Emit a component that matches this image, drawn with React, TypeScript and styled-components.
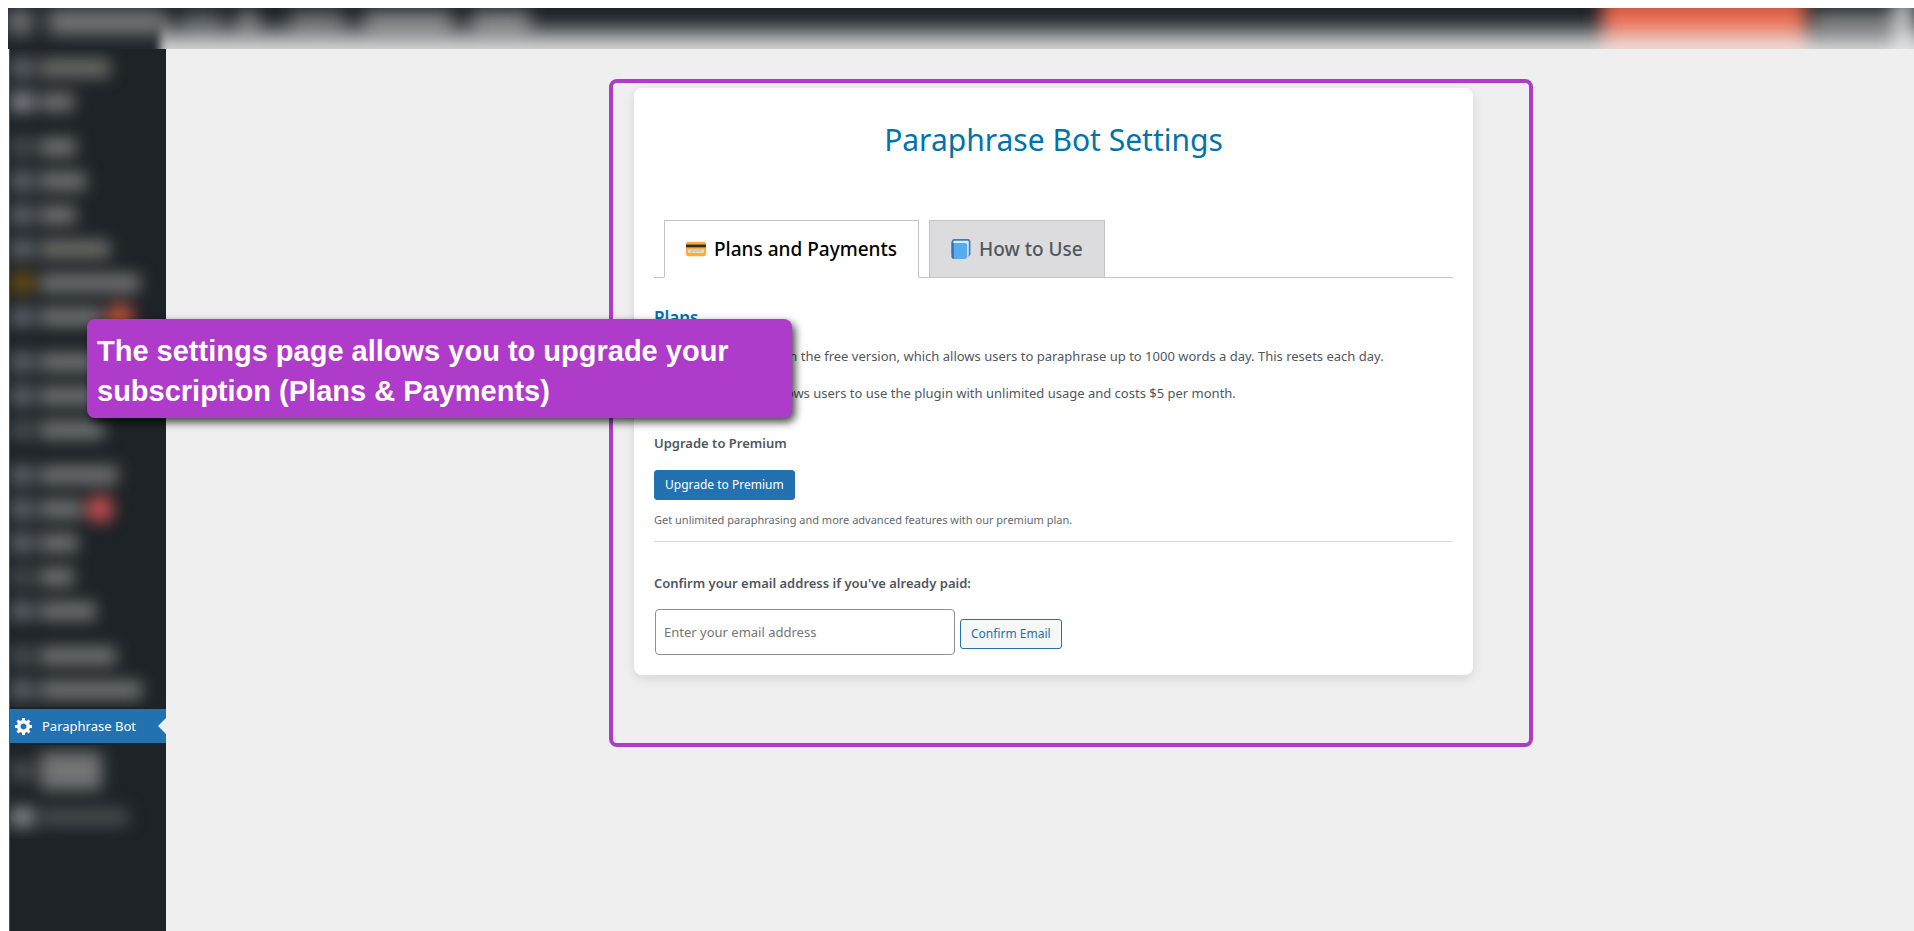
import React, { useState } from 'react';
import styled, { createGlobalStyle, css } from 'styled-components';

const accent = '#ae3bc9';
const ink = '#1d2327';
const canvas = '#efefef';

const GlobalStyle = createGlobalStyle`
  *, *::before, *::after { box-sizing: border-box; }
  html, body, #root { height: 100%; }
  body {
    margin: 0;
    background: #fff;
    color: #50575e;
    font: 400 13px/20px "Noto Sans", "Open Sans", sans-serif;
  }
  button, input { font: inherit; }
  h1, h2, h3, p { margin: 0; }
`;

const Page = styled.div`
  display: flex;
  flex-direction: column;
  min-height: 100%;
  padding: 8px 0 0 8px;
`;

const TopBar = styled.header`
  position: relative;
  flex: none;
  display: flex;
  height: 41px;
  overflow: hidden;
  background: ${ink};
`;

const BarItems = styled.div`
  flex: 1;
  display: flex;
  align-items: flex-start;
  padding-top: 2px;
  filter: blur(9px);
`;

const BarItem = styled.span<{ $w: number; $gap?: number; $tone?: string }>`
  flex: none;
  width: ${p => p.$w}px;
  height: 24px;
  margin-right: ${p => p.$gap ?? 16}px;
  background: ${p => p.$tone ?? '#77797b'};
`;

const BarSpace = styled.span`
  flex: 1;
`;

const UpdateItem = styled.span`
  flex: none;
  width: 204px;
  height: 64px;
  margin: -12px 8px 0 0;
  background: #e8654a;
`;

const AccountItem = styled.span`
  flex: none;
  width: 80px;
  height: 24px;
  background: #6b6e70;
`;

const BarEdge = styled.span`
  flex: none;
  width: 20px;
  height: 64px;
  margin-top: -12px;
  background: #c4c4c4;
`;

const BarFade = styled.div`
  position: absolute;
  inset: 0 -24px -12px 152px;
  background: linear-gradient(
    rgba(239, 239, 239, 0) 10%,
    rgba(239, 239, 239, 0.2) 32%,
    rgba(239, 239, 239, 0.6) 56%,
    rgba(239, 239, 239, 0.86) 76%
  );
  filter: blur(4px);
`;

const Body = styled.div`
  flex: 1;
  display: flex;
`;

const Sidebar = styled.nav`
  flex: none;
  display: flex;
  flex-direction: column;
  width: 157px;
  margin-left: 1px;
  border-left: 1px solid #50575e;
  background: ${ink};
`;

const HazeGroup = styled.div`
  overflow: hidden;
  padding-top: 2px;
`;

const Haze = styled.div`
  filter: blur(8px);
`;

const HazeRow = styled.div<{ $apart?: boolean; $h?: number }>`
  display: flex;
  align-items: center;
  height: ${p => p.$h ?? 34}px;
  margin-top: ${p => (p.$apart ? 11 : 0)}px;
`;

const HazeIcon = styled.span<{ $tone?: string }>`
  flex: none;
  width: 24px;
  height: 20px;
  margin-right: 6px;
  background: ${p => p.$tone ?? '#5c6168'};
`;

const HazeLabel = styled.span<{ $w: number; $h?: number; $tone?: string }>`
  flex: none;
  width: ${p => p.$w}px;
  height: ${p => p.$h ?? 18}px;
  background: ${p => p.$tone ?? '#727475'};
`;

const HazeBadge = styled.span<{ $tone: string }>`
  flex: none;
  width: 28px;
  height: 28px;
  margin-left: 4px;
  border-radius: 50%;
  background: ${p => p.$tone};
`;

const MenuLink = styled.a`
  position: relative;
  display: flex;
  align-items: center;
  gap: 9px;
  height: 34px;
  margin: 2px 0;
  padding-left: 5px;
  background: #2271b1;
  color: #fff;
  line-height: 18px;
  text-decoration: none;

  &::after {
    content: '';
    position: absolute;
    right: 0;
    top: 9px;
    border: 8px solid transparent;
    border-left: 0;
    border-right-color: ${canvas};
  }
`;

const Main = styled.main`
  flex: 1;
  padding: 30px 0 40px 62px;
  background: ${canvas};
`;

const Highlight = styled.div`
  width: 924px;
  max-width: 100%;
  margin: 0 auto;
  padding: 5px 56px 68px 21px;
  border: 4px solid ${accent};
  border-radius: 8px;
`;

const Card = styled.section`
  padding: 20px;
  border-radius: 8px;
  background: #fff;
  box-shadow: 0 4px 12px rgba(0, 0, 0, 0.1);
`;

const Title = styled.h1`
  padding: 12px 0 60px;
  color: #0073aa;
  font-size: 30px;
  font-weight: 400;
  line-height: 40px;
  text-align: center;
`;

const Tabs = styled.div`
  display: flex;
  gap: 10px;
  padding-left: 10px;
  border-bottom: 1px solid #c3c4c7;
`;

const Tab = styled.button<{ $active: boolean }>`
  display: flex;
  align-items: center;
  gap: 8px;
  height: 58px;
  margin-bottom: -1px;
  padding: 0 21px;
  border: 1px solid #c3c4c7;
  background: #dcdcde;
  color: #50575e;
  font-size: 19px;
  font-weight: 500;
  line-height: 24px;
  ${p => p.$active && css`
    border-bottom-color: #fff;
    background: #fff;
    color: #000;
  `}
`;

const SectionTitle = styled.h2`
  margin: 28px 0 16px;
  color: #0073aa;
  font-size: 17px;
  font-weight: 600;
  line-height: 24px;
`;

const Text = styled.p`
  margin-bottom: 17px;
`;

const Label = styled.h3`
  padding: 13px 0 17px;
  font-size: 13px;
  font-weight: 600;
  line-height: 20px;
`;

const FieldLabel = styled.label`
  display: block;
  padding: 31px 0 16px;
  font-weight: 600;
`;

const Button = styled.button<{ $primary?: boolean }>`
  height: 30px;
  padding: 0 10px;
  border: 1px solid #2271b1;
  border-radius: 3px;
  background: ${p => (p.$primary ? '#2271b1' : '#f6f7f7')};
  color: ${p => (p.$primary ? '#fff' : '#2271b1')};
  font-size: 12px;
`;

const Note = styled.p`
  padding: 10px 0 11px;
  color: #646970;
  font-size: 11px;
`;

const Rule = styled.hr`
  margin: 0;
  border: 0;
  border-top: 1px solid #dcdcde;
`;

const EmailRow = styled.form`
  display: flex;
  align-items: flex-end;
  gap: 5px;
  padding-left: 1px;
`;

const EmailInput = styled.input`
  width: 300px;
  height: 46px;
  padding: 0 8px;
  border: 1px solid #8c8f94;
  border-radius: 4px;
  background: #fff;
  color: #2c3338;

  &::placeholder { color: #757575; opacity: 1; }
`;

const ButtonSlot = styled.div`
  padding-bottom: 6px;
`;

const Callout = styled.aside`
  position: absolute;
  top: 319px;
  left: 87px;
  width: 705px;
  padding: 12px 10px 7px;
  border-radius: 8px;
  background: ${accent};
  box-shadow: 3px 4px 8px rgba(0, 0, 0, 0.75);
  color: #fff;
  font: 700 29px/40px "Liberation Sans", Arial, sans-serif;
`;

const GearIcon = () => (
  <svg width="18" height="18" viewBox="1 1 18 18" fill="#fff" aria-hidden="true">
    <path d="M18 12h-2.180c-.17.7-.44 1.350-.81 1.930l1.540 1.540-2.100 2.100-1.540-1.540c-.58.36-1.230.63-1.910.79V19H8v-2.180c-.68-.16-1.330-.43-1.910-.79l-1.540 1.540-2.120-2.120 1.540-1.540c-.36-.58-.63-1.230-.79-1.910H1V9.030h2.170c.16-.7.44-1.350.8-1.940L2.430 5.550l2.100-2.100 1.540 1.540c.58-.37 1.240-.64 1.930-.81V2h3v2.180c.68.16 1.330.43 1.910.79l1.540-1.540 2.120 2.120-1.540 1.540c.36.59.64 1.240.8 1.940H18V12zm-8.500 1.500c1.660 0 3-1.340 3-3s-1.340-3-3-3-3 1.340-3 3 1.340 3 3 3z" />
  </svg>
);

const CardIcon = () => (
  <svg width="20" height="20" viewBox="0 0 36 36" aria-hidden="true">
    <path fill="#ffac33" d="M4 5h28s4 0 4 4v18s0 4-4 4H4s-4 0-4-4V9s0-4 4-4z" />
    <path fill="#292f33" d="M0 10h36v5H0z" />
    <path fill="#e9dfd0" d="M4 19h28v6H4z" />
    <path fill="none" stroke="#8899a6" d="M8 24c2-3 3-4 3-2s3-3 4-1 3 0 4 0 2 2 3 0 3 2 6 0" />
  </svg>
);

const BookIcon = () => (
  <svg width="20" height="22" viewBox="0 0 36 38" aria-hidden="true">
    <path fill="#3f7fb0" d="M35 28c0 2-2 4-4 4H7c-3 0-6-2-6-5V6c0-3 2-5 5-5h25c2 0 4 2 4 4z" />
    <path fill="#e1e8ed" d="M32 30c0 1-1 2-2 2H7c-2 0-3-1-3-3V7c0-2 1-3 3-3h23c1 0 2 1 2 2z" />
    <path fill="#55acee" d="M29 33c0 2-2 4-4 4H5c-2 0-4-2-4-4V7c1 1 2 1 4 1h20c2 0 4 1 4 4z" />
    <path fill="#2f75ab" d="M5 37c-2 0-4-2-4-4V6c0 1 1 2 4 2z" />
  </svg>
);

type Item = {
  w: number;
  h?: number;
  row?: number;
  apart?: boolean;
  icon?: string;
  tone?: string;
  badge?: string;
};

const upperItems: Item[] = [
  { w: 70, tone: '#6e6e6a' },
  { w: 34, icon: '#80838a' },
  { w: 36, apart: true, icon: '#454a4f' },
  { w: 46 },
  { w: 36 },
  { w: 70, tone: '#6e6e6a' },
  { w: 100, icon: '#6a4c12' },
  { w: 62, badge: '#b8503c' },
  { w: 76, apart: true },
  { w: 62 },
  { w: 64, icon: '#484c50' },
  { w: 78, apart: true },
  { w: 42, badge: '#c04c4e' },
  { w: 38 },
  { w: 34, icon: '#42474b' },
  { w: 56 },
  { w: 76, apart: true, icon: '#484c50' },
  { w: 102 },
];

const lowerItems: Item[] = [
  { w: 62, h: 38, row: 48, icon: '#484c50' },
  { w: 88, row: 44, icon: '#83868a', tone: '#464b4e' },
];

const HazeList = ({ items }: { items: Item[] }) => (
  <HazeGroup aria-hidden="true">
    <Haze>
      {items.map((it, i) => (
        <HazeRow key={i} $apart={it.apart} $h={it.row}>
          <HazeIcon $tone={it.icon} />
          <HazeLabel $w={it.w} $h={it.h} $tone={it.tone} />
          {it.badge && <HazeBadge $tone={it.badge} />}
        </HazeRow>
      ))}
    </Haze>
  </HazeGroup>
);

const tabs = [
  { name: 'Plans and Payments', Icon: CardIcon },
  { name: 'How to Use', Icon: BookIcon },
];

export default function App() {
  const [active, setActive] = useState(0);
  return (
    <Page>
      <GlobalStyle />
      <TopBar>
        <BarItems aria-hidden="true">
          <BarItem $w={24} />
          <BarItem $w={118} />
          <BarItem $w={40} $tone="#4d5255" />
          <BarItem $w={20} $gap={32} />
          <BarItem $w={54} $gap={20} $tone="#606467" />
          <BarItem $w={88} $gap={20} />
          <BarItem $w={58} />
          <BarSpace />
          <UpdateItem />
          <AccountItem />
          <BarEdge />
        </BarItems>
        <BarFade />
      </TopBar>
      <Body>
        <Sidebar aria-label="Admin menu">
          <HazeList items={upperItems} />
          <MenuLink href="#paraphrase-bot" aria-current="page">
            <GearIcon />
            Paraphrase Bot
          </MenuLink>
          <HazeList items={lowerItems} />
        </Sidebar>
        <Main>
          <Highlight>
            <Card>
              <Title>Paraphrase Bot Settings</Title>
              <Tabs role="tablist">
                {tabs.map(({ name, Icon }, i) => (
                  <Tab
                    key={name}
                    type="button"
                    role="tab"
                    aria-selected={active === i}
                    $active={active === i}
                    onClick={() => setActive(i)}
                  >
                    <Icon />
                    {name}
                  </Tab>
                ))}
              </Tabs>
              <SectionTitle>Plans</SectionTitle>
              <Text>
                Your site is currently on the free version, which allows users to paraphrase up to 1000 words a day.
                This resets each day.
              </Text>
              <Text>
                This premium plan allows users to use the plugin with unlimited usage and costs $5 per month.
              </Text>
              <Label>Upgrade to Premium</Label>
              <Button type="button" $primary>Upgrade to Premium</Button>
              <Note>Get unlimited paraphrasing and more advanced features with our premium plan.</Note>
              <Rule />
              <FieldLabel htmlFor="email">Confirm your email address if you've already paid:</FieldLabel>
              <EmailRow onSubmit={e => e.preventDefault()}>
                <EmailInput id="email" type="email" placeholder="Enter your email address" />
                <ButtonSlot>
                  <Button type="submit">Confirm Email</Button>
                </ButtonSlot>
              </EmailRow>
            </Card>
          </Highlight>
        </Main>
      </Body>
      <Callout>The settings page allows you to upgrade your subscription (Plans &amp; Payments)</Callout>
    </Page>
  );
}
